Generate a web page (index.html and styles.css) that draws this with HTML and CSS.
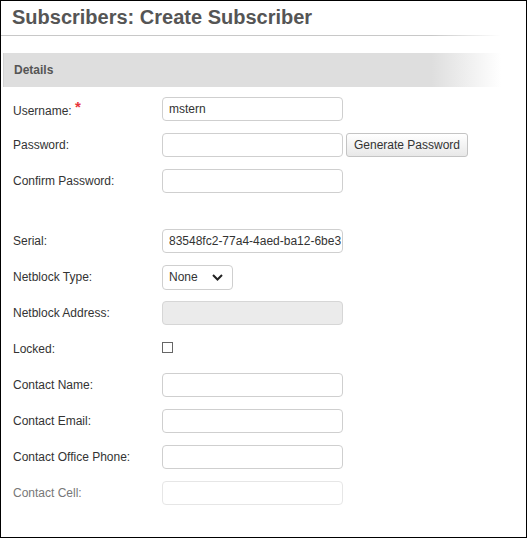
FILE: index.html
```html
<!DOCTYPE html>
<html>
<head>
<meta charset="utf-8">
<title>Subscribers: Create Subscriber</title>
<link rel="stylesheet" href="styles.css">
</head>
<body>
<div class="frame">
  <h1 class="title">Subscribers: Create Subscriber</h1>
  <div class="divider"></div>
  <div class="panel">
    <div class="panel-head">Details</div>
    <div class="form">
      <div class="row">
        <label class="label">Username: <span class="req">*</span></label>
        <input class="field" type="text" value="mstern">
      </div>
      <div class="row">
        <label class="label">Password:</label>
        <input class="field" type="password" value="">
        <button class="btn" type="button">Generate Password</button>
      </div>
      <div class="row">
        <label class="label">Confirm Password:</label>
        <input class="field" type="password" value="">
      </div>
      <div class="spacer"></div>
      <div class="row">
        <label class="label">Serial:</label>
        <input class="field" type="text" value="83548fc2-77a4-4aed-ba12-6be3e9f1c0a7">
      </div>
      <div class="row">
        <label class="label">Netblock Type:</label>
        <div class="select">
          <span>None</span>
          <svg class="chev" width="11" height="7" viewBox="0 0 11 7"><path d="M1 1 L5.5 5.5 L10 1" fill="none" stroke="#222" stroke-width="2"/></svg>
        </div>
      </div>
      <div class="row">
        <label class="label">Netblock Address:</label>
        <input class="field disabled" type="text" value="" disabled>
      </div>
      <div class="row">
        <label class="label">Locked:</label>
        <span class="check"></span>
      </div>
      <div class="row">
        <label class="label">Contact Name:</label>
        <input class="field" type="text" value="">
      </div>
      <div class="row">
        <label class="label">Contact Email:</label>
        <input class="field" type="text" value="">
      </div>
      <div class="row">
        <label class="label">Contact Office Phone:</label>
        <input class="field" type="text" value="">
      </div>
      <div class="row faded">
        <label class="label">Contact Cell:</label>
        <input class="field" type="text" value="">
      </div>
    </div>
  </div>
</div>
</body>
</html>
```

FILE: styles.css
```css
html, body {
  margin: 0;
  padding: 0;
  background: #fff;
}
.frame {
  width: 527px;
  height: 538px;
  box-sizing: border-box;
  border: 1px solid #000;
  overflow: hidden;
  font-family: "Liberation Sans", Arial, sans-serif;
  color: #333;
}
.title {
  margin: 0;
  padding: 4px 0 0 11px;
  font-size: 20px;
  line-height: 24px;
  font-weight: bold;
  color: #555;
}
.divider {
  margin-top: 6px;
  width: 500px;
  height: 1px;
  background: linear-gradient(to right, #c8c8c8 0, #c8c8c8 86%, rgba(200,200,200,0) 100%);
}
.panel {
  margin: 17px 0 0 2px;
}
.panel-head {
  height: 34px;
  width: 498px;
  box-sizing: border-box;
  padding-left: 10px;
  display: flex;
  align-items: center;
  font-size: 12px;
  font-weight: bold;
  color: #555;
  border-left: 1px solid #d2d2d2;
  background: linear-gradient(to right, #dedede 0, #dedede 86%, rgba(222,222,222,0) 100%);
}
.form {
  margin-top: 10px;
  padding-left: 10px;
  display: flex;
  flex-direction: column;
  gap: 12px;
}
.row {
  display: flex;
  align-items: center;
  height: 24px;
}
.spacer {
  height: 12px;
}
.label {
  width: 149px;
  flex: none;
  font-size: 12px;
  color: #333;
}
.req {
  color: #e8363c;
  font-weight: bold;
  font-size: 15px;
  position: relative;
  top: -3px;
}
.field {
  width: 181px;
  height: 24px;
  box-sizing: border-box;
  margin: 0;
  border: 1px solid #cfcfcf;
  border-radius: 4px;
  padding: 0 1px 0 6px;
  font-family: "Liberation Sans", Arial, sans-serif;
  font-size: 12px;
  color: #333;
  background: #fff;
  outline: none;
}
.field.disabled {
  background: #ebebeb;
  border-color: #d6d6d6;
}
.btn {
  margin-left: 3px;
  width: 122px;
  height: 24px;
  box-sizing: border-box;
  padding: 0;
  border: 1px solid #c4c4c4;
  border-radius: 3px;
  background: linear-gradient(to bottom, #ffffff 0, #e8e8e8 100%);
  font-family: "Liberation Sans", Arial, sans-serif;
  font-size: 12px;
  color: #333;
}
.select {
  width: 71px;
  height: 25px;
  box-sizing: border-box;
  border: 1px solid #cfcfcf;
  border-radius: 4px;
  padding: 0 9px 0 6px;
  display: flex;
  align-items: center;
  justify-content: space-between;
  font-size: 12px;
  color: #333;
}
.chev {
  display: block;
}
.check {
  width: 11px;
  height: 11px;
  box-sizing: border-box;
  border: 1px solid #666;
  background: #fff;
  margin-top: -4px;
}
.faded .label {
  color: #777;
}
.faded .field {
  border-color: #e6e6e6;
}
```
